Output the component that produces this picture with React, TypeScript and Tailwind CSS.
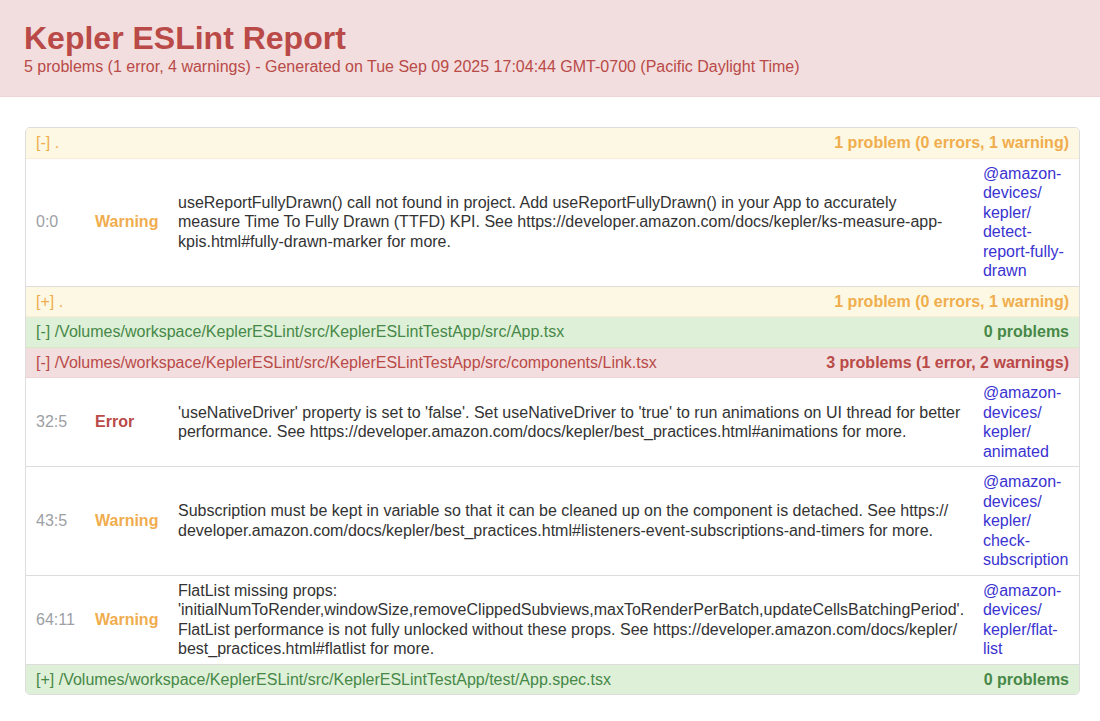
import React from "react";

type Sev = "Warning" | "Error";
type Msg = { pos: string; sev: Sev; lines: string[]; rule: string[] };
type FileGroup = {
  path: string;
  open: boolean;
  tone: "ok" | "warn" | "err";
  summary: string;
  messages: Msg[];
};

const BASE = "/Volumes/workspace/KeplerESLint/src/KeplerESLintTestApp";

const files: FileGroup[] = [
  {
    path: ".",
    open: true,
    tone: "warn",
    summary: "1 problem (0 errors, 1 warning)",
    messages: [
      {
        pos: "0:0",
        sev: "Warning",
        lines: [
          "useReportFullyDrawn() call not found in project. Add useReportFullyDrawn() in your App to accurately",
          "measure Time To Fully Drawn (TTFD) KPI. See https://developer.amazon.com/docs/kepler/ks-measure-app-",
          "kpis.html#fully-drawn-marker for more.",
        ],
        rule: ["@amazon-", "devices/", "kepler/", "detect-", "report-fully-", "drawn"],
      },
    ],
  },
  { path: ".", open: false, tone: "warn", summary: "1 problem (0 errors, 1 warning)", messages: [] },
  { path: `${BASE}/src/App.tsx`, open: true, tone: "ok", summary: "0 problems", messages: [] },
  {
    path: `${BASE}/src/components/Link.tsx`,
    open: true,
    tone: "err",
    summary: "3 problems (1 error, 2 warnings)",
    messages: [
      {
        pos: "32:5",
        sev: "Error",
        lines: [
          "'useNativeDriver' property is set to 'false'. Set useNativeDriver to 'true' to run animations on UI thread for better",
          "performance. See https://developer.amazon.com/docs/kepler/best_practices.html#animations for more.",
        ],
        rule: ["@amazon-", "devices/", "kepler/", "animated"],
      },
      {
        pos: "43:5",
        sev: "Warning",
        lines: [
          "Subscription must be kept in variable so that it can be cleaned up on the component is detached. See https://",
          "developer.amazon.com/docs/kepler/best_practices.html#listeners-event-subscriptions-and-timers for more.",
        ],
        rule: ["@amazon-", "devices/", "kepler/", "check-", "subscription"],
      },
      {
        pos: "64:11",
        sev: "Warning",
        lines: [
          "FlatList missing props:",
          "'initialNumToRender,windowSize,removeClippedSubviews,maxToRenderPerBatch,updateCellsBatchingPeriod'.",
          "FlatList performance is not fully unlocked without these props. See https://developer.amazon.com/docs/kepler/",
          "best_practices.html#flatlist for more.",
        ],
        rule: ["@amazon-", "devices/", "kepler/flat-", "list"],
      },
    ],
  },
  { path: `${BASE}/test/App.spec.tsx`, open: false, tone: "ok", summary: "0 problems", messages: [] },
];

const toneClass = {
  ok: "text-[#468847] bg-[#dff0d8] border-[#d6e9c6]",
  warn: "text-[#f0ad4e] bg-[#fcf8e3] border-[#fbeed5]",
  err: "text-[#b94a48] bg-[#f2dede] border-[#eed3d7]",
};

const withBreaks = (parts: string[]) =>
  parts.map((p, i) => (
    <React.Fragment key={i}>
      {p}
      {i < parts.length - 1 && <br />}
    </React.Fragment>
  ));

export default function App() {
  const rows: React.ReactNode[] = [];
  files.forEach((f, fi) => {
    const isLast = fi === files.length - 1;
    rows.push(
      <tr key={`h${fi}`}>
        <th
          colSpan={4}
          className={`px-[10px] py-[5px] text-left font-normal ${isLast ? "" : "border-b"} ${toneClass[f.tone]}`}
        >
          <span className="float-right ml-5 font-bold">{f.summary}</span>
          {f.open ? "[-]" : "[+]"} {f.path}
        </th>
      </tr>
    );
    if (!f.open) return;
    f.messages.forEach((m, mi) => {
      rows.push(
        <tr key={`m${fi}-${mi}`}>
          <td className="border-b border-[#ddd] px-[10px] py-[5px] align-middle text-[#9da0a4]">{m.pos}</td>
          <td
            className={`border-b border-[#ddd] px-[10px] py-[5px] align-middle font-bold ${
              m.sev === "Error" ? "text-[#b94a48]" : "text-[#f0ad4e]"
            }`}
          >
            {m.sev}
          </td>
          <td className="border-b border-[#ddd] px-[10px] py-[5px] align-middle text-[#333]">{withBreaks(m.lines)}</td>
          <td className="border-b border-[#ddd] px-[10px] py-[5px] align-middle">
            <a href="#" className="text-[#3a33d1] no-underline">
              {withBreaks(m.rule)}
            </a>
          </td>
        </tr>
      );
    });
  });

  return (
    <div className="min-h-screen bg-white font-['Liberation_Sans',Arial,sans-serif] text-[16px] leading-[19.5px] text-[#333]">
      <div className="border-b border-[#eed3d7] bg-[#f2dede] px-[24px] py-5 text-[#b94a48]">
        <h1 className="m-0 text-[32px] font-bold leading-[36.5px]">Kepler ESLint Report</h1>
        <div>
          <span>5 problems (1 error, 4 warnings)</span> - Generated on Tue Sep 09 2025 17:04:44 GMT-0700 (Pacific
          Daylight Time)
        </div>
      </div>

      <div className="ml-[25px] mt-[30px] w-[1055px] overflow-hidden rounded-[5px] border border-[#ddd]">
        <table className="w-full table-fixed border-separate border-spacing-0">
          <colgroup>
            <col className="w-[59px]" />
            <col className="w-[83px]" />
            <col />
            <col className="w-[106px]" />
          </colgroup>
          <tbody>{rows}</tbody>
        </table>
      </div>
    </div>
  );
}
